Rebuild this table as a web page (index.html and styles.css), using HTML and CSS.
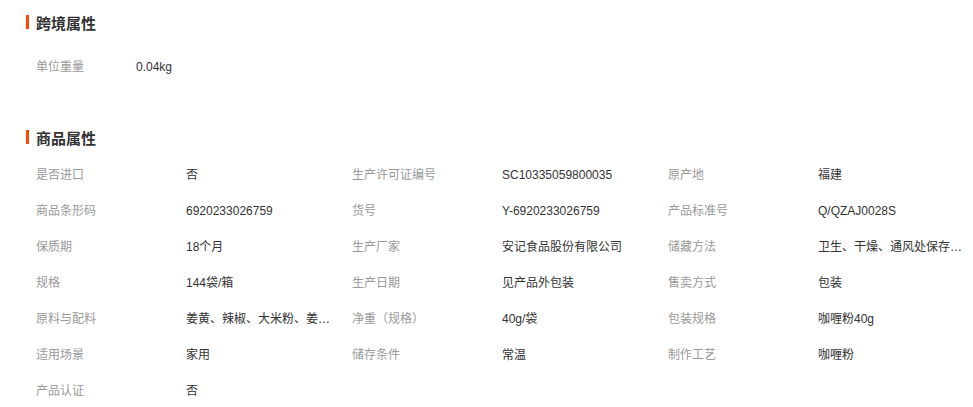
FILE: index.html
```html
<!DOCTYPE html>
<html>
    <head>
        <meta charset="utf-8">
        <title>商品属性</title>
        <link rel="stylesheet" href="styles.css">
    </head>
    <body>
        <div class="attrs">
            <div class="section crossBorder">
                <h3 class="sectionTitle">跨境属性</h3>
                <div class="weightRow">
                    <span class="label">单位重量</span>
                    <span class="value">0.04kg</span>
                </div>
            </div>
            <div class="section goods">
                <h3 class="sectionTitle">商品属性</h3>
                <ul class="attrGrid">
                    <li><span class="label">是否进口</span><span class="value">否</span></li>
                    <li><span class="label">生产许可证编号</span><span class="value">SC10335059800035</span></li>
                    <li><span class="label">原产地</span><span class="value">福建</span></li>
                    <li><span class="label">商品条形码</span><span class="value">6920233026759</span></li>
                    <li><span class="label">货号</span><span class="value">Y-6920233026759</span></li>
                    <li><span class="label">产品标准号</span><span class="value">Q/QZAJ0028S</span></li>
                    <li><span class="label">保质期</span><span class="value">18个月</span></li>
                    <li><span class="label">生产厂家</span><span class="value">安记食品股份有限公司</span></li>
                    <li><span class="label">储藏方法</span><span class="value">卫生、干燥、通风处保存，避免阳光直射</span></li>
                    <li><span class="label">规格</span><span class="value">144袋/箱</span></li>
                    <li><span class="label">生产日期</span><span class="value">见产品外包装</span></li>
                    <li><span class="label">售卖方式</span><span class="value">包装</span></li>
                    <li><span class="label">原料与配料</span><span class="value">姜黄、辣椒、大米粉、姜粉、胡椒、茴香</span></li>
                    <li><span class="label">净重（规格）</span><span class="value">40g/袋</span></li>
                    <li><span class="label">包装规格</span><span class="value">咖喱粉40g</span></li>
                    <li><span class="label">适用场景</span><span class="value">家用</span></li>
                    <li><span class="label">储存条件</span><span class="value">常温</span></li>
                    <li><span class="label">制作工艺</span><span class="value">咖喱粉</span></li>
                    <li><span class="label">产品认证</span><span class="value">否</span></li>
                </ul>
            </div>
        </div>
    </body>
</html>
```

FILE: styles.css
```css
body {
    margin: 0;
    background: #fff;
    color: #333;
    font-family: "Liberation Sans", "Noto Sans CJK SC", sans-serif;
    font-size: 12px;
}
.attrs {
    padding-left: 26px;
    padding-top: 8px;
}
.sectionTitle {
    display: flex;
    align-items: center;
    height: 28px;
    margin: 0;
    font-size: 15px;
    font-weight: bold;
    color: #333;
}
.sectionTitle::before {
    content: "";
    width: 3px;
    height: 14px;
    margin-right: 7px;
    background: #f40;
}
.weightRow {
    display: flex;
    margin-top: 13px;
    padding-left: 10px;
    line-height: 36px;
}
.weightRow .label {
    width: 100px;
}
.goods {
    margin-top: 38px;
}
.attrGrid {
    display: grid;
    grid-template-columns: repeat(3, 316px);
    margin: 6px 0 0;
    padding: 0 0 0 10px;
    list-style: none;
}
.attrGrid li {
    display: flex;
    line-height: 36px;
}
.label {
    color: #999;
    width: 150px;
    flex-shrink: 0;
}
.attrGrid .value {
    width: 150px;
    white-space: nowrap;
    overflow: hidden;
    text-overflow: ellipsis;
}
.value {
    color: #333;
}
```
